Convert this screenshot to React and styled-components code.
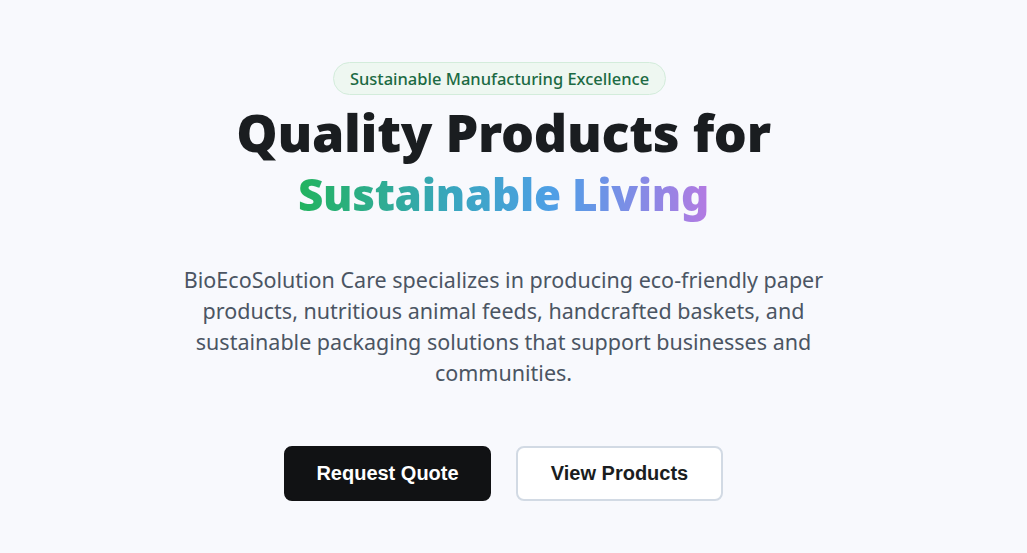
import React from "react";
import styled, { createGlobalStyle } from "styled-components";

const GlobalStyle = createGlobalStyle`
  html, body {
    margin: 0;
    padding: 0;
    background: #f8f9fd;
  }
`;

const Hero = styled.section`
  min-height: 553px;
  box-sizing: border-box;
  padding: 62px 20px 0 0;
  display: flex;
  flex-direction: column;
  align-items: center;
  font-family: "Noto Sans", "Open Sans", sans-serif;
`;

const Badge = styled.span`
  display: inline-flex;
  align-items: center;
  height: 33px;
  box-sizing: border-box;
  margin-right: 8px;
  padding: 0 16px;
  border-radius: 999px;
  background: #eef7f1;
  border: 1px solid #d3ecdb;
  color: #1c6a43;
  font-size: 16.5px;
  font-weight: 500;
`;

const Title = styled.h1`
  margin: 6px 0 0;
  display: flex;
  flex-direction: column;
  align-items: center;
  text-align: center;
  font-size: 52px;
  font-weight: 900;
  line-height: 62px;
  color: #1a1d20;
  letter-spacing: -0.3px;
`;

const Gradient = styled.span`
  display: inline-block;
  background: linear-gradient(90deg, #22b35e 0%, #3aa6c0 38%, #4f9fe6 62%, #7b8ee6 80%, #b47ae2 100%);
  -webkit-background-clip: text;
  background-clip: text;
  color: transparent;
  font-size: 44px;
`;

const Lead = styled.p`
  margin: 39px 0 0;
  max-width: 680px;
  text-align: center;
  font-size: 21.5px;
  line-height: 31px;
  color: #4b5563;
`;

const Actions = styled.div`
  display: flex;
  gap: 25px;
  margin-top: 58px;
`;

const Button = styled.button`
  width: 207px;
  height: 55px;
  border-radius: 8px;
  font-family: "Liberation Sans", Arial, sans-serif;
  font-size: 20px;
  font-weight: 700;
  cursor: pointer;
  border: 2px solid ${({ primary }) => (primary ? "#111214" : "#d2dae4")};
  background: ${({ primary }) => (primary ? "#111214" : "#ffffff")};
  color: ${({ primary }) => (primary ? "#ffffff" : "#1a1d20")};
`;

export default function App() {
  return (
    <>
      <GlobalStyle />
      <Hero>
        <Badge>Sustainable Manufacturing Excellence</Badge>
        <Title>
          <span>Quality Products for</span>
          <Gradient>Sustainable Living</Gradient>
        </Title>
        <Lead>
          BioEcoSolution Care specializes in producing eco-friendly paper
          products, nutritious animal feeds, handcrafted baskets, and
          sustainable packaging solutions that support businesses and
          communities.
        </Lead>
        <Actions>
          <Button primary>Request Quote</Button>
          <Button>View Products</Button>
        </Actions>
      </Hero>
    </>
  );
}
